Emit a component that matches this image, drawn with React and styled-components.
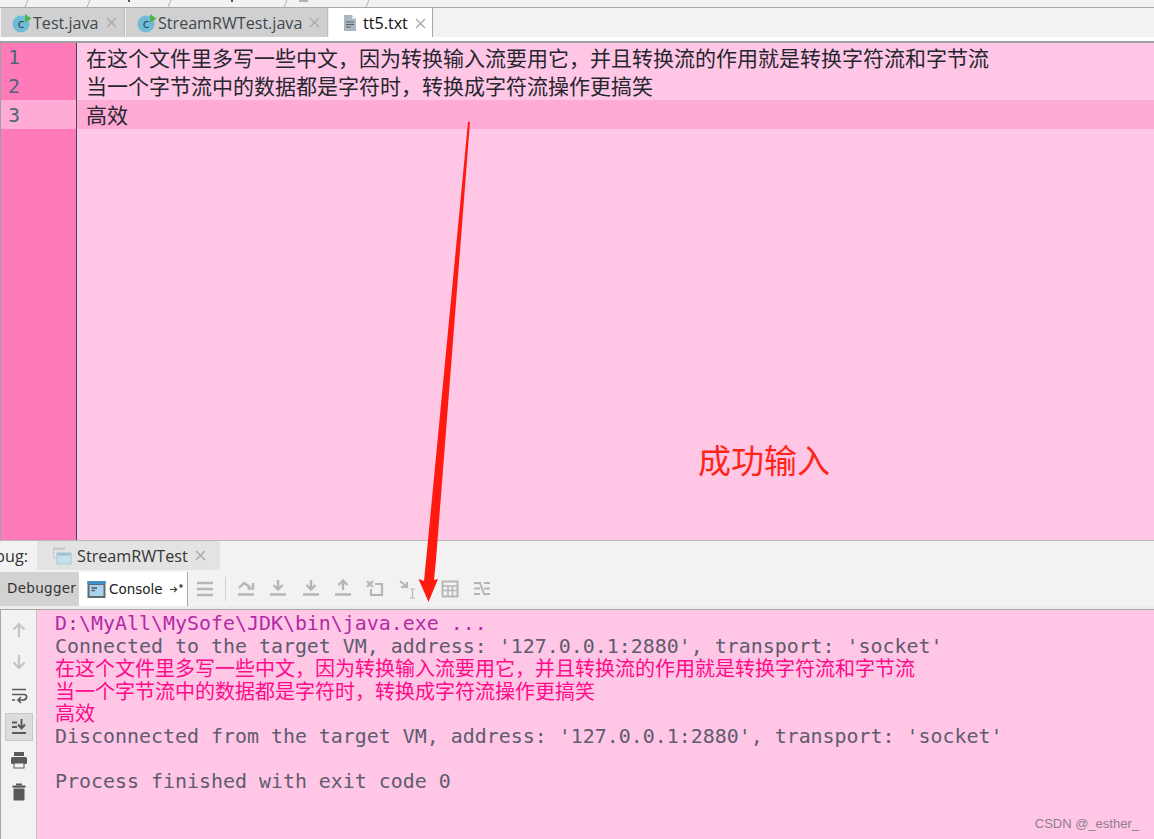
import React from "react";
import styled, { createGlobalStyle } from "styled-components";

const CJK = '"Noto Sans CJK SC", sans-serif';
const MONO = '"DejaVu Sans Mono", "Noto Sans CJK SC", monospace';
const UI = '"Open Sans", "Noto Sans", sans-serif';

const GlobalStyle = createGlobalStyle`
  html, body { margin: 0; padding: 0; background: #f2f2f2; }
  * { box-sizing: border-box; }
`;

const Page = styled.div`
  position: relative;
  display: flex;
  flex-direction: column;
  width: 1154px;
  height: 839px;
  overflow: hidden;
  background: #ffc6e6;
`;

const CrumbStrip = styled.svg`
  display: block;
  width: 1154px;
  height: 7px;
  flex: none;
  background: #f2f2f2;
`;

const TabBar = styled.div`
  display: flex;
  flex: none;
  height: 30px;
  padding-left: 1px;
  border-top: 1px solid #a8a8a8;
  background: #f2f2f2;
`;

const FileTab = styled.div`
  display: flex;
  align-items: center;
  width: ${(p) => p.$width}px;
  height: 30px;
  margin-right: 1px;
  padding-left: ${(p) => p.$pad}px;
  background: ${(p) => (p.$active ? "#ffffff" : "#d0d0d0")};
  border-right: 1px solid ${(p) => (p.$active ? "#a8a8a8" : "#bcbcbc")};
  border-bottom: ${(p) => (p.$active ? "none" : "1px solid #b4b4b4")};
  color: ${(p) => (p.$active ? "#101010" : "#404850")};
  font: 16.1px ${UI};
`;

const TabClose = styled.svg`
  width: 11px;
  height: 11px;
  margin-left: ${(p) => p.$gap}px;
  flex: none;
`;

const WhiteGap = styled.div`
  flex: none;
  height: 4px;
  background: #ffffff;
`;

const Editor = styled.div`
  display: grid;
  grid-template-columns: 75px 1fr;
  grid-auto-rows: min-content;
  flex: none;
  height: 499px;
  border-top: 2px solid #a0a0a0;
  border-left: 1px solid #a0a0a0;
  background: linear-gradient(to right, #ff7ab8 75px, #3e4a50 75px, #3e4a50 76px, #ffc6e6 76px);
`;

const LineNumber = styled.div`
  height: ${(p) => p.$h}px;
  padding-left: 7px;
  background: ${(p) => (p.$current ? "#ffabd6" : "transparent")};
  color: #4f6678;
  font: 20px/${(p) => p.$lh}px ${MONO};
`;

const CodeLine = styled.div`
  height: ${(p) => p.$h}px;
  margin-left: 1px;
  padding-left: 9px;
  background: ${(p) => (p.$current ? "#ffabd6" : "transparent")};
  color: #26262e;
  font: 21px/${(p) => p.$h}px ${CJK};
  white-space: nowrap;
`;

const DebugHeader = styled.div`
  display: flex;
  flex: none;
  height: 32px;
  border-top: 1px solid #b8b8b8;
  background: #f2f2f2;
`;

const DebugLabel = styled.div`
  display: flex;
  justify-content: flex-end;
  width: 37px;
  padding-right: 9px;
  overflow: hidden;
  color: #333333;
  font: 16.2px/30px ${UI};
`;

const RunTab = styled.div`
  display: flex;
  align-items: center;
  width: 183px;
  height: 29px;
  padding-left: 15px;
  background: #e3e3e3;
  color: #353535;
  font: 16.2px ${UI};
`;

const ToolBar = styled.div`
  display: flex;
  align-items: center;
  flex: none;
  height: 34px;
  background: #f2f2f2;
`;

const DebuggerTab = styled.div`
  width: 79px;
  height: 34px;
  padding-left: 7px;
  background: #d2d2d2;
  color: #333333;
  font: 13.5px/33px "DejaVu Sans", sans-serif;
  letter-spacing: 0.3px;
`;

const ConsoleTab = styled.div`
  display: flex;
  align-items: center;
  gap: 3px;
  width: 109px;
  height: 34px;
  padding-left: 8px;
  background: #ffffff;
  border-right: 1px solid #a8a8a8;
  color: #1c1c1c;
  font: 13.5px "DejaVu Sans", sans-serif;
`;

const ToolIcons = styled.div`
  display: flex;
  align-items: center;
  gap: 12.4px;
  padding-left: 7px;
`;

const ToolDivider = styled.div`
  width: 1px;
  height: 24px;
  margin: 0 -3px 0 -2px;
  background: #cfcfcf;
`;

const ArrowSlot = styled.div`
  width: 0;
  margin-left: -3px;
`;

const GreyRule = styled.div`
  flex: none;
  height: 4px;
  background: #ececec;
  border-bottom: 1.5px solid #a8a8a8;
`;

const ConsolePane = styled.div`
  display: flex;
  flex: 1;
  min-height: 0;
`;

const SideRail = styled.div`
  display: flex;
  flex-direction: column;
  align-items: center;
  gap: 4.4px;
  width: 37px;
  padding-top: 6px;
  background: #f2f2f2;
  border-left: 1px solid #a8a8a8;
  border-right: 1px solid #c4c4c4;
`;

const RailButton = styled.div`
  display: flex;
  align-items: center;
  justify-content: center;
  width: 28px;
  height: 28px;
  background: ${(p) => (p.$on ? "#dcdcdc" : "transparent")};
  border: 1px solid ${(p) => (p.$on ? "#c8c8c8" : "transparent")};
`;

const Output = styled.div`
  flex: 1;
  padding: 3px 0 0 18px;
  background: #ffc6e6;
`;

const OutLine = styled.div`
  height: 22.5px;
  color: ${(p) => p.$color};
  font: ${(p) => (p.$cjk ? `20px/20px ${CJK}` : `19.93px/22.5px ${MONO}`)};
  white-space: pre;
`;

const ArrowLayer = styled.svg`
  position: absolute;
  left: 0;
  top: 0;
  width: 1154px;
  height: 839px;
  pointer-events: none;
`;

const Note = styled.div`
  position: absolute;
  left: 698px;
  top: 436px;
  color: #ff2418;
  font: 33px/46px ${CJK};
`;

const Watermark = styled.div`
  position: absolute;
  right: 15px;
  bottom: 8px;
  color: #8f7f8c;
  font: 13px "Liberation Sans", sans-serif;
`;

const Glyph = styled.svg`
  display: block;
  flex: none;
  width: ${(p) => p.$size || 20}px;
  height: ${(p) => p.$size || 20}px;
`;

function CloseX({ gap }) {
  return (
    <TabClose $gap={gap} viewBox="0 0 11 11">
      <path d="M1 1 L10 10 M10 1 L1 10" stroke="#a9a9a9" strokeWidth="1.4" fill="none" />
    </TabClose>
  );
}

function ClassIcon() {
  return (
    <Glyph $size={20} viewBox="0 0 20 20" style={{ marginRight: 1 }}>
      <circle cx="9" cy="11" r="8.5" fill="#6fbcd8" />
      <text x="9" y="15" textAnchor="middle" fontFamily="DejaVu Sans" fontSize="12" fill="#33424c">c</text>
      <path d="M13 1 L19.5 5.5 L13 10 Z" fill="#4fb34a" />
    </Glyph>
  );
}

function FileIcon() {
  return (
    <Glyph $size={18} viewBox="0 0 18 18" style={{ marginRight: 4 }}>
      <path d="M3 1 H11 L15 5 V17 H3 Z" fill="#aab6c0" />
      <path d="M11 1 L15 5 H11 Z" fill="#dfe4e8" />
      <path d="M5 8 H13 M5 10.5 H13 M5 13 H10" stroke="#56606a" strokeWidth="1.2" />
    </Glyph>
  );
}

function RunWindowIcon() {
  return (
    <Glyph $size={20} viewBox="0 0 20 20" style={{ marginRight: 5 }}>
      <path d="M1 1.5 H13 V4 H1 Z" fill="#c8c8c8" />
      <path d="M1.5 4 V12 H5" fill="none" stroke="#c8c8c8" />
      <rect x="5" y="7" width="14" height="11" fill="#c6dfec" stroke="#a9c6d6" />
      <rect x="5" y="7" width="14" height="2.5" fill="#9cc2d6" />
    </Glyph>
  );
}

function ConsoleIcon() {
  return (
    <Glyph $size={19} viewBox="0 0 19 19">
      <rect x="0.5" y="1" width="18" height="17" fill="#5e6a74" />
      <rect x="0.5" y="1" width="18" height="3" fill="#3f8fc0" />
      <rect x="2.5" y="5" width="14" height="11" fill="#a9d3ec" />
      <path d="M4.5 8 H10 M4.5 10.5 H8" stroke="#4e5a64" strokeWidth="1.4" />
    </Glyph>
  );
}

function PinIcon() {
  return (
    <Glyph $size={14} viewBox="0 0 14 14" style={{ marginLeft: 3 }}>
      <path d="M1 7.5 H7 M5 5 L7.8 7.5 L5 10" stroke="#444444" strokeWidth="1.1" fill="none" />
      <rect x="10.5" y="2.5" width="3" height="3" fill="#444444" />
    </Glyph>
  );
}

const G = "#b6b6b6";

const toolbarIcons = [
  <path key="a" d="M3 9 L8 4 L14 8 M17 4 V9.5 H11.5 M2 15.5 H18" fill="none" stroke={G} strokeWidth="2.4" />,
  <path key="b" d="M10 1 V9 M5.5 6 L10 10.5 L14.5 6 M2 15.5 H18" fill="none" stroke={G} strokeWidth="2.4" />,
  <path key="c" d="M10 1 V9 M5.5 6 L10 10.5 L14.5 6 M2 15.5 H18" fill="none" stroke={G} strokeWidth="2.4" />,
  <path key="d" d="M10 11 V3 M5.5 6 L10 1.5 L14.5 6 M2 15.5 H18" fill="none" stroke={G} strokeWidth="2.4" />,
  <path key="e" d="M2 2 L8 8 M8 2 L2 8 M10 5 H17 V16 H6 V10" fill="none" stroke={G} strokeWidth="2.2" />,
  <g key="f" fill="none" stroke={G} strokeWidth="2.2">
    <path d="M2 2 L9 8 M3 8 H9 V3" />
    <path d="M12 10 H17 M12 19 H17 M14.5 10 V19" strokeWidth="1.2" />
  </g>,
];

const lastIcons = [
  <g key="g" fill="none" stroke={G}>
    <rect x="2.5" y="2.5" width="15" height="15" strokeWidth="2" />
    <path d="M3 7 H17 M3 11.5 H17 M8 7 V17 M12.5 7 V17" strokeWidth="1.6" />
  </g>,
  <path key="h" d="M2 4 H8 L12 15 H18 M2 15 H8 M12 4 H18 M2 9.5 H8 M12 9.5 H18" fill="none" stroke={G} strokeWidth="2" />,
];

const railIcons = [
  { draw: <path d="M9 16 V3 M3.5 8.5 L9 3 L14.5 8.5" fill="none" stroke="#c4c4c4" strokeWidth="2.2" /> },
  { draw: <path d="M9 2 V15 M3.5 9.5 L9 15 L14.5 9.5" fill="none" stroke="#c4c4c4" strokeWidth="2.2" /> },
  { draw: <path d="M2 3.5 H16 M2 8.5 H14 Q17 8.5 16.5 11.5 Q16 14 12 14 H8 M11 11 L8 14 L11 17 M2 14 H5" fill="none" stroke="#5a5a5a" strokeWidth="1.7" /> },
  { on: true, draw: <path d="M2 4.5 H7 M2 9 H7 M2 15 H16 M11.5 1 V10 M8 6.5 L11.5 10.5 L15 6.5" fill="none" stroke="#5a5a5a" strokeWidth="1.9" /> },
  { draw: <g fill="#5a5a5a"><rect x="4" y="1" width="10" height="4" /><rect x="1" y="6" width="16" height="7" rx="1.5" /><rect x="4" y="12" width="10" height="5" fill="#f2f2f2" stroke="#5a5a5a" /></g> },
  { draw: <g fill="#5a5a5a"><rect x="6" y="0.5" width="6" height="2" /><rect x="2.5" y="2.5" width="13" height="2.2" /><rect x="3.5" y="5.5" width="11" height="12" rx="1" /></g> },
];

const LONG = "在这个文件里多写一些中文，因为转换输入流要用它，并且转换流的作用就是转换字符流和字节流";
const MID = "当一个字节流中的数据都是字符时，转换成字符流操作更搞笑";

const editorLines = [
  { h: 28, numLh: 29, text: LONG },
  { h: 29, numLh: 31, text: MID },
  { h: 29, numLh: 31, text: "高效", current: true },
];

const GREY = "#5e5c6e";
const PINK = "#ff0a8a";

const outputLines = [
  { color: "#b42aa6", text: "D:\\MyAll\\MySofe\\JDK\\bin\\java.exe ..." },
  { color: GREY, text: "Connected to the target VM, address: '127.0.0.1:2880', transport: 'socket'" },
  { color: PINK, text: LONG, cjk: true },
  { color: PINK, text: MID, cjk: true },
  { color: PINK, text: "高效", cjk: true },
  { color: GREY, text: "Disconnected from the target VM, address: '127.0.0.1:2880', transport: 'socket'" },
  { color: GREY, text: " " },
  { color: GREY, text: "Process finished with exit code 0" },
];

export default function App() {
  return (
    <Page>
      <GlobalStyle />
      <CrumbStrip viewBox="0 0 1154 7">
        <path d="M28 0 L25 7 M90 0 L87 7 M171 0 L168 7 M287 0 L284 7 M369 0 L366 7" stroke="#b0b0b0" />
        <path d="M129 0 V2 M232 0 V2" stroke="#555555" strokeWidth="2" />
        <rect x="299" y="0" width="9" height="2" fill="#a8b4bc" />
      </CrumbStrip>

      <TabBar>
        <FileTab $width={124} $pad={11}>
          <ClassIcon />Test.java<CloseX gap={7} />
        </FileTab>
        <FileTab $width={202} $pad={11}>
          <ClassIcon />StreamRWTest.java<CloseX gap={7} />
        </FileTab>
        <FileTab $width={104} $pad={12} $active>
          <FileIcon />tt5.txt<CloseX gap={7} />
        </FileTab>
      </TabBar>
      <WhiteGap />

      <Editor>
        {editorLines.map((line, i) => (
          <React.Fragment key={i}>
            <LineNumber $h={line.h} $lh={line.numLh} $current={line.current}>{i + 1}</LineNumber>
            <CodeLine $h={line.h} $current={line.current}>{line.text}</CodeLine>
          </React.Fragment>
        ))}
      </Editor>

      <DebugHeader>
        <DebugLabel>Debug:</DebugLabel>
        <RunTab>
          <RunWindowIcon />StreamRWTest<CloseX gap={7} />
        </RunTab>
      </DebugHeader>

      <ToolBar>
        <DebuggerTab>Debugger</DebuggerTab>
        <ConsoleTab>
          <ConsoleIcon />Console<PinIcon />
        </ConsoleTab>
        <ToolIcons>
          <Glyph viewBox="0 0 20 20">
            <path d="M2 4 H18 M2 10 H18 M2 16 H18" stroke={G} strokeWidth="2.6" />
          </Glyph>
          <ToolDivider />
          {toolbarIcons.map((icon, i) => (
            <Glyph key={i} viewBox="0 0 20 20">{icon}</Glyph>
          ))}
          {/* the slot under the arrow head stays empty */}
          <ArrowSlot />
          {lastIcons.map((icon, i) => (
            <Glyph key={i} viewBox="0 0 20 20">{icon}</Glyph>
          ))}
        </ToolIcons>
      </ToolBar>
      <GreyRule />

      <ConsolePane>
        <SideRail>
          {railIcons.map((item, i) => (
            <RailButton key={i} $on={item.on}>
              <Glyph $size={18} viewBox="0 0 18 18">{item.draw}</Glyph>
            </RailButton>
          ))}
        </SideRail>
        <Output>
          {outputLines.map((line, i) => (
            <OutLine key={i} $color={line.color} $cjk={line.cjk}>{line.text}</OutLine>
          ))}
        </Output>
      </ConsolePane>

      <ArrowLayer viewBox="0 0 1154 839">
        <path
          d="M468 122 L470 122 L436 560 L434 580 L438 579 L428.5 602 L418.5 579 L424 581 L429 530 Z"
          fill="#ff1a10"
        />
      </ArrowLayer>
      <Note>成功输入</Note>
      <Watermark>CSDN @_esther_</Watermark>
    </Page>
  );
}
